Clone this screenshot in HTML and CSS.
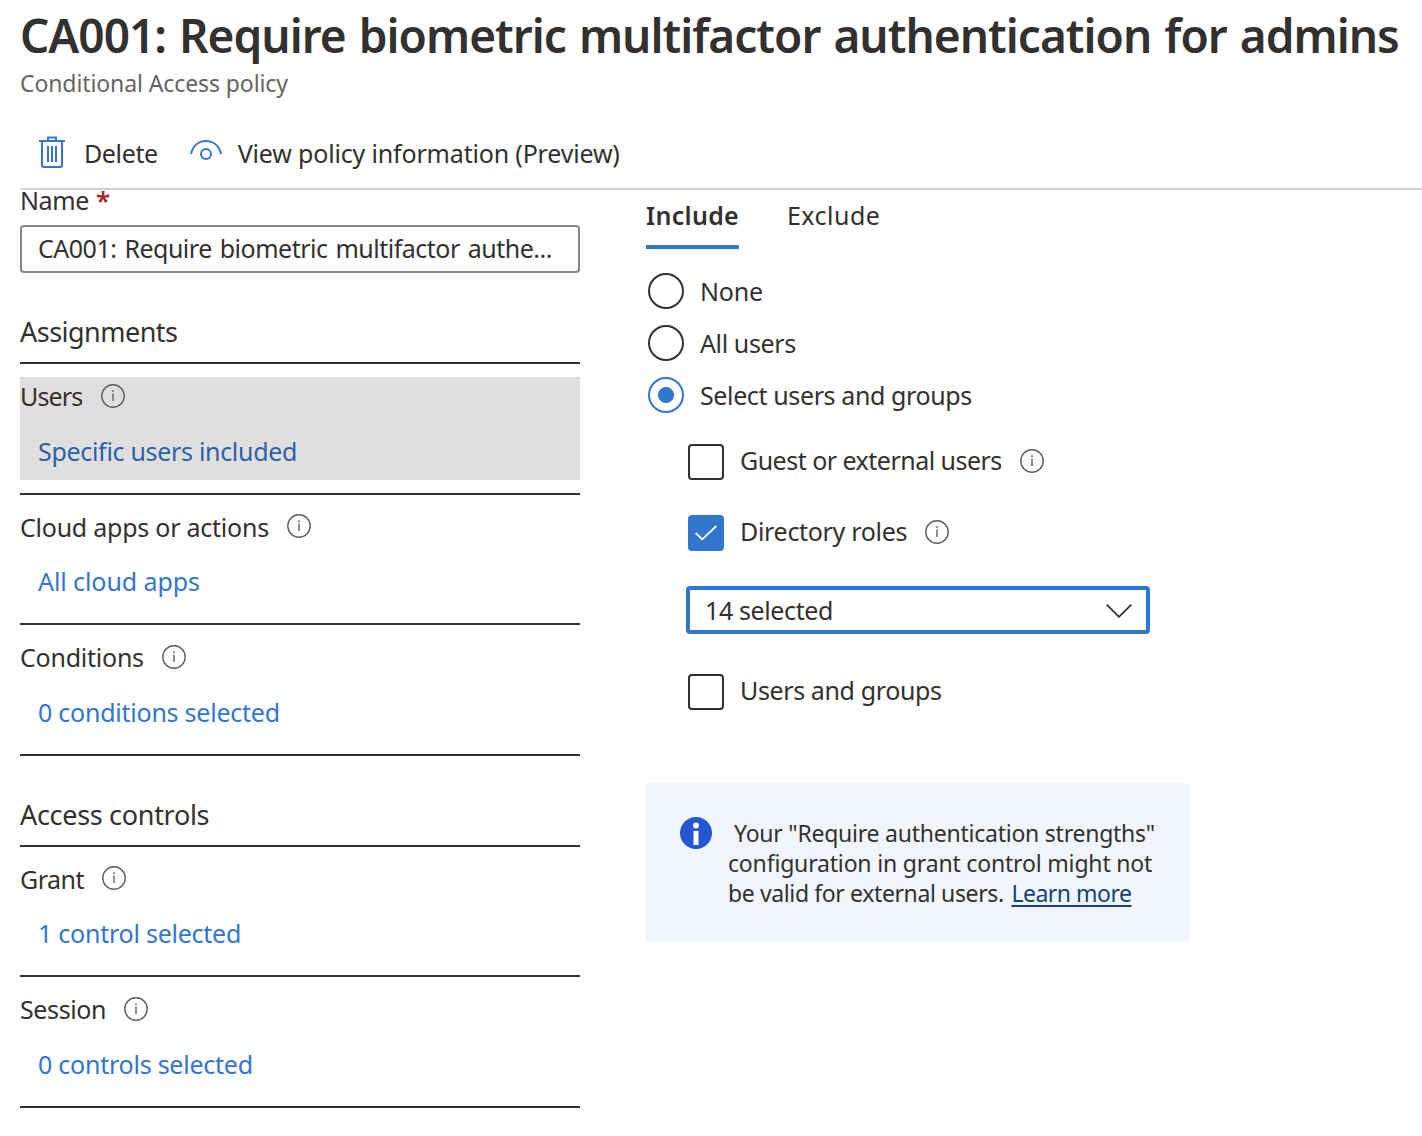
FILE: index.html
```html
<!DOCTYPE html>
<html lang="en">
<head>
<meta charset="utf-8">
<title>Conditional Access policy</title>
<link rel="stylesheet" href="styles.css">
</head>
<body>
<svg class="defs" width="0" height="0" aria-hidden="true">
  <symbol id="info" viewBox="0 0 24 24"><circle cx="12" cy="12" r="11.2" fill="none" stroke="currentColor" stroke-width="1.4"/><path d="M12 9.500v7.500M12 6.300v1.800" stroke="currentColor" stroke-width="1.4"/></symbol>
</svg>
<header class="header">
  <h1 class="title">CA001: Require biometric multifactor authentication for admins</h1>
  <p class="subtitle">Conditional Access policy</p>
</header>
<div class="toolbar">
  <button class="command">
    <svg class="trash" width="26" height="32" viewBox="0 0 26 32" fill="none" stroke="currentColor" stroke-width="2"><path d="M0 5h26M9 5V1.500h8V5M3 5v24q0 2 2 2h16q2 0 2-2V5M9 10v16M13 10v16M17 10v16"/></svg>
    <span class="snug">Delete</span>
  </button>
  <button class="command command-view">
    <svg class="eye" width="32" height="20" viewBox="0 0 32 20" fill="none" stroke="currentColor" stroke-width="2"><path d="M1 14C3 5.500 9 1 16 1s13 4.500 15 13"/><circle cx="16" cy="14" r="5"/></svg>
    <span class="loose">View policy information (Preview)</span>
  </button>
</div>
<main class="content">
  <section class="policy">
    <label class="name-label"><span class="snug">Name</span><b class="required">*</b></label>
    <div class="name-input">CA001: Require biometric multifactor authe...</div>
    <h2 class="group-title"><span class="tight">Assignments</span></h2>
    <div class="item tall selected">
      <div class="item-body">
        <div class="item-label"><span class="tightest">Users</span><svg class="info"><use href="#info"/></svg></div>
        <a class="item-link">Specific users included</a>
      </div>
    </div>
    <div class="item">
      <div class="item-label"><span class="mild">Cloud apps or actions</span><svg class="info"><use href="#info"/></svg></div>
      <a class="item-link"><span class="normal">All cloud apps</span></a>
    </div>
    <div class="item tall">
      <div class="item-label"><span class="mild">Conditions</span><svg class="info"><use href="#info"/></svg></div>
      <a class="item-link"><span class="mild">0 conditions selected</span></a>
    </div>
    <h2 class="group-title">Access controls</h2>
    <div class="item">
      <div class="item-label"><span class="tight">Grant</span><svg class="info"><use href="#info"/></svg></div>
      <a class="item-link"><span class="mild">1 control selected</span></a>
    </div>
    <div class="item tall">
      <div class="item-label"><span class="snug">Session</span><svg class="info"><use href="#info"/></svg></div>
      <a class="item-link"><span class="mild">0 controls selected</span></a>
    </div>
  </section>
  <section class="users">
    <nav class="tabs"><a class="tab active">Include</a><a class="tab wide">Exclude</a></nav>
    <div class="radios">
      <label class="radio"><i class="dot"></i><span class="loose">None</span></label>
      <label class="radio"><i class="dot"></i><span class="snug">All users</span></label>
      <label class="radio checked"><i class="dot"></i><span class="snug">Select users and groups</span></label>
    </div>
    <div class="options">
      <label class="check"><i class="box"></i><span class="tight">Guest or external users</span><svg class="info"><use href="#info"/></svg></label>
      <label class="check roles"><i class="box on"><svg width="22" height="16" viewBox="0 0 22 16" fill="none" stroke="#fff" stroke-width="1.800"><path d="M.7 8l6.500 6.300L21.300 1"/></svg></i><span>Directory roles</span><svg class="info"><use href="#info"/></svg></label>
      <div class="select"><span class="snug">14 selected</span><svg class="chevron" width="26" height="14" viewBox="0 0 26 14" fill="none" stroke="currentColor" stroke-width="1.800"><path d="M.7.700L13 12.800 25.300.700"/></svg></div>
      <label class="check"><i class="box"></i><span class="snug">Users and groups</span></label>
    </div>
    <aside class="notice">
      <svg class="notice-icon" width="32" height="32" viewBox="0 0 32 32"><circle cx="16" cy="16" r="16" fill="#2558d0"/><circle cx="16" cy="8.500" r="3" fill="#fff"/><path d="M13.500 14h5v14h-5z" fill="#fff"/></svg>
      <p class="notice-text"><span class="lead mild">Your "Require authentication strengths"</span><br><span class="loose">configuration in grant control might not</span><br><span class="snug">be valid for external users.</span> <a class="learn">Learn more</a></p>
    </aside>
  </section>
</main>
</body>
</html>
```
FILE: styles.css
```css
* { box-sizing: border-box; }
body {
  margin: 0;
  background: #fff;
  color: #323130;
  font: 25px/36px "Noto Sans", "Open Sans", sans-serif;
  letter-spacing: -.31px;
  white-space: nowrap;
}
h1, h2, p { margin: 0; font-weight: 400; }

/* Letter fitting */
.wide { letter-spacing: .5px; }
.normal { letter-spacing: -.08px; }
.loose { letter-spacing: -.175px; }
.mild { letter-spacing: -.24px; }
.snug { letter-spacing: -.38px; }
.tight { letter-spacing: -.52px; }
.tightest { letter-spacing: -.85px; }

.defs { position: absolute; }
.header { padding-left: 20px; height: 120px; }
.title {
  height: 66px;
  font-size: 46px;
  line-height: 70px;
  font-weight: 600;
  letter-spacing: -.98px;
  word-spacing: 2px;
}
.subtitle { color: #646464; font-size: 23px; line-height: 35px; letter-spacing: -.1px; }
.toolbar {
  display: flex;
  height: 70px;
  margin-left: 20px;
  padding: 15px 0 0 19px;
  border-bottom: 2px solid #d2d2d2;
}
.command {
  display: flex;
  height: 36px;
  padding: 0;
  border: 0;
  background: none;
  color: inherit;
  font: inherit;
}
.command svg { color: #3276d0; }
.trash { margin: 1px 19px 0 0; }
.eye { margin: 5px 16px 0 0; }
.command-view { margin-left: 32px; }
.content { display: flex; align-items: flex-start; gap: 66px; padding-left: 20px; }
.policy { width: 560px; }
.name-label { display: flex; height: 35px; line-height: 21px; }
.required {
  margin-left: 7px;
  color: #a4262c;
  font-size: 26px;
  font-weight: 600;
  line-height: 20px;
}
.name-input {
  height: 48px;
  padding-left: 16px;
  border: 2px solid #868686;
  border-radius: 4px;
  line-height: 43px;
  letter-spacing: -.5px;
  word-spacing: 2px;
}
.group-title {
  height: 91px;
  padding-top: 40px;
  border-bottom: 2px solid #323130;
  font-size: 27px;
  line-height: 38px;
}
.item { height: 130px; padding-top: 14px; border-bottom: 2px solid #323130; }
.item-label { display: flex; height: 36px; margin-bottom: 18px; }
.info { flex: none; width: 24px; height: 24px; margin: 5px 0 0 18px; color: #605e5c; }
.item-link { display: block; padding-left: 18px; color: #3276d0; }
.tall { height: 131px; }
.tall .item-label { margin-bottom: 19px; }
.tall .info { margin-top: 6px; }
.selected { padding-top: 13px; }
.item-body { height: 103px; padding-top: 1px; background: #e1dfdd; }
.selected .item-link { color: #2a62ae; }
.selected .info { margin-left: 19px; }
.users { width: 544px; }
.tabs { display: flex; gap: 48px; height: 59px; padding-top: 7px; }
.tab { height: 52px; }
.active { border-bottom: 4px solid #3276d0; font-weight: 600; letter-spacing: .27px; }
.radios { display: grid; gap: 16px; padding: 24px 0 0 2px; }
.radio, .check { display: flex; align-items: flex-start; height: 36px; gap: 16px; }
.dot {
  width: 36px;
  height: 36px;
  border: 2px solid #323130;
  border-radius: 50%;
}
.checked .dot {
  border-color: #3276d0;
  background: radial-gradient(circle, #3276d0 7.500px, transparent 8.500px);
}
.options { padding: 31px 0 0 42px; }
.check { line-height: 33px; }
.check .info { margin-left: 2px; }
.box {
  display: grid;
  place-items: center;
  width: 36px;
  height: 36px;
  border: 2px solid #323130;
  border-radius: 4px;
}
.on { border-color: #3276d0; background: #3276d0; }
.roles { margin-top: 35px; }
.select {
  display: flex;
  align-items: center;
  justify-content: space-between;
  width: 464px;
  height: 48px;
  margin: 35px 0 40px -2px;
  padding: 0 14px 0 15px;
  border: 4px solid #3276d0;
  border-radius: 4px;
}
.chevron { margin-top: 2px; }
.notice {
  display: flex;
  gap: 16px;
  height: 158px;
  margin-top: 73px;
  padding: 34px 0 0 34px;
  border-radius: 4px;
  background: #f0f5fe;
}
.notice-icon { flex: none; }
.notice-text { padding-top: 1px; font-size: 23px; line-height: 30px; }
.lead { margin-left: 6px; }
.learn {
  margin-left: 2px;
  color: #15427c;
  letter-spacing: -.5px;
  text-decoration: underline;
  text-decoration-thickness: 2px;
  text-underline-offset: 3px;
}
```
